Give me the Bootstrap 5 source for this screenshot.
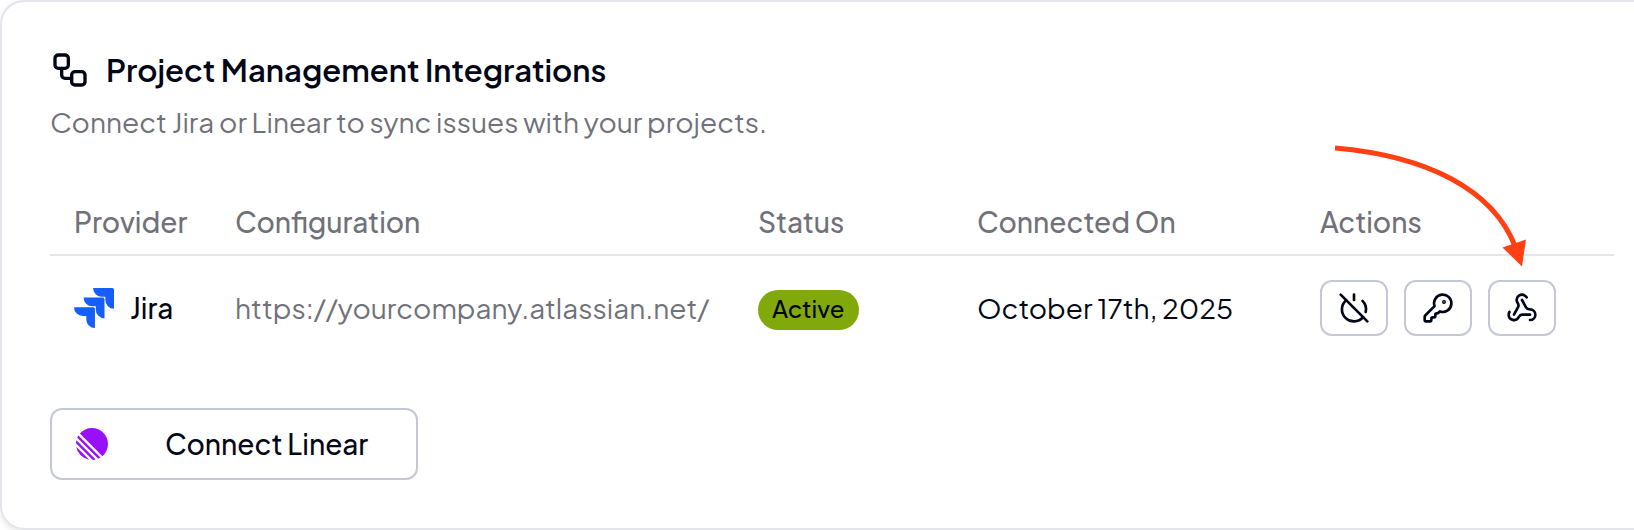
<!DOCTYPE html>
<html lang="en">
<head>
<meta charset="utf-8">
<meta name="viewport" content="width=device-width, initial-scale=1">
<title>Project Management Integrations</title>
<link rel="stylesheet" href="https://cdn.jsdelivr.net/npm/bootstrap@5.3.0/dist/css/bootstrap.min.css">
<style>
  :root { --ink: #020617; --soft: #71717a; --line: #e4e4eb; --edge: #c4c8d6; }
  body { font-family: "Plus Jakarta Sans", Inter, sans-serif; font-size: 28px; line-height: 40px; color: var(--ink); background: #fff; }
  .panel { border: 2px solid var(--line); border-right: 0; border-radius: 24px 0 0 24px; padding: 48px 20px 48px 48px; box-shadow: 0 2px 6px rgba(0, 0, 0, .1); }
  .panel-title { font-size: 31px; line-height: 40px; font-weight: 600; }
  .panel-desc { color: var(--soft); margin-top: 12px; }
  .integrations { margin-top: 48px; table-layout: fixed; min-width: 1540px; color: var(--ink); }
  .integrations > :not(caption) > * > * { padding: 24px; background: transparent; border: 0; color: inherit; }
  .integrations > thead > tr > th { padding-top: 12px; padding-bottom: 12px; font-weight: 500; color: var(--soft); border-bottom: 2px solid var(--line); }
  .col-provider { width: 161px; }
  .col-config { width: 523px; }
  .col-status { width: 219px; }
  .col-date { width: 343px; }
  .integrations > tbody > tr > .cell-url { color: var(--soft); }
  .status-pill { font-size: 24px; line-height: 36px; padding: 0 14px 4px; font-weight: 500; color: var(--ink); background: #82a90b; }
  .btn-outlined { --bs-btn-color: var(--ink); --bs-btn-hover-bg: #f4f4f5; --bs-btn-hover-color: var(--ink); --bs-btn-border-color: var(--edge); --bs-btn-hover-border-color: var(--edge); border-width: 2px; border-radius: 12px; font-size: 28px; line-height: 40px; font-weight: 500; }
  .btn-square { width: 68px; height: 56px; padding: 0; }
  .btn-linear { padding: 14px 48px 14px 24px; margin-top: 48px; gap: 57px; }
  .line-icon { fill: none; stroke: currentColor; stroke-width: 2; stroke-linecap: round; stroke-linejoin: round; flex: none; }
  .pointer-arrow { right: 26px; bottom: 66px; pointer-events: none; }
</style>
</head>
<body>
<main class="panel">
  <header>
    <h1 class="panel-title d-flex align-items-center gap-3 m-0">
      <svg class="line-icon" width="40" height="40" viewBox="0 0 24 24" aria-hidden="true"><rect x="3" y="3" width="8" height="8" rx="2"/><path d="M7 11v4a2 2 0 0 0 2 2h4"/><rect x="13" y="13" width="8" height="8" rx="2"/></svg>
      Project Management Integrations
    </h1>
    <p class="panel-desc mb-0">Connect Jira or Linear to sync issues with your projects.</p>
  </header>

  <table class="table integrations align-middle mb-0">
    <colgroup><col class="col-provider"><col class="col-config"><col class="col-status"><col class="col-date"><col></colgroup>
    <thead>
      <tr><th scope="col">Provider</th><th scope="col">Configuration</th><th scope="col">Status</th><th scope="col">Connected On</th><th scope="col">Actions</th></tr>
    </thead>
    <tbody>
      <tr>
        <td class="pe-0">
          <div class="d-flex align-items-center gap-3">
            <svg width="40" height="40" viewBox="0 0 24 24" fill="#155dfc" aria-hidden="true"><path d="M11.571 11.513H0a5.218 5.218 0 0 0 5.232 5.215h2.13v2.057A5.215 5.215 0 0 0 12.575 24V12.518a1.005 1.005 0 0 0-1.005-1.005zm5.723-5.756H5.736a5.215 5.215 0 0 0 5.215 5.214h2.129v2.058a5.218 5.218 0 0 0 5.215 5.214V6.758a1.001 1.001 0 0 0-1.001-1.001zM23.013 0H11.455a5.215 5.215 0 0 0 5.215 5.215h2.129v2.057A5.215 5.215 0 0 0 24 12.483V1.005A1.001 1.001 0 0 0 23.013 0Z"/></svg>
            <span class="fw-medium">Jira</span>
          </div>
        </td>
        <td class="cell-url">https://yourcompany.atlassian.net/</td>
        <td><span class="status-pill rounded-pill d-inline-block align-middle">Active</span></td>
        <td>October 17th, 2025</td>
        <td>
          <div class="d-flex gap-3">
            <button type="button" class="btn btn-outlined btn-square d-flex align-items-center justify-content-center" aria-label="Disconnect">
              <svg class="line-icon" width="32" height="32" viewBox="0 0 24 24"><path d="M18.36 6.64A9 9 0 0 1 20.77 15"/><path d="M6.16 6.16a9 9 0 1 0 12.68 12.68"/><path d="M12 2v4"/><path d="m2 2 20 20"/></svg>
            </button>
            <button type="button" class="btn btn-outlined btn-square d-flex align-items-center justify-content-center" aria-label="Update credentials">
              <svg class="line-icon" width="32" height="32" viewBox="0 0 24 24"><path d="M2.586 17.414A2 2 0 0 0 2 18.828V21a1 1 0 0 0 1 1h3a1 1 0 0 0 1-1v-1a1 1 0 0 1 1-1h1a1 1 0 0 0 1-1v-1a1 1 0 0 1 1-1h.172a2 2 0 0 0 1.414-.586l.814-.814a6.5 6.5 0 1 0-4-4z"/><circle cx="16.5" cy="7.5" r=".5" fill="currentColor"/></svg>
            </button>
            <div class="position-relative">
              <button type="button" class="btn btn-outlined btn-square d-flex align-items-center justify-content-center" aria-label="Configure webhook">
                <svg class="line-icon" width="32" height="32" viewBox="0 0 24 24"><path d="M18 16.98h-5.99c-1.1 0-1.95.94-2.48 1.9A4 4 0 0 1 2 17c.01-.7.2-1.4.57-2"/><path d="m6 17 3.13-5.78c.53-.97.1-2.18-.5-3.1a4 4 0 1 1 6.89-4.06"/><path d="m12 6 3.13 5.73C15.66 12.7 16.9 13 18 13a4 4 0 0 1 0 8"/></svg>
              </button>
              <svg class="pointer-arrow position-absolute" width="200" height="130" viewBox="0 0 200 130" aria-hidden="true"><path d="M5 8C98 16 163 50 185 106" fill="none" stroke="#ff4013" stroke-width="5"/><path d="M172.500 107.500 196 99.500 192 126.500Z" fill="#ff4013"/></svg>
            </div>
          </div>
        </td>
      </tr>
    </tbody>
  </table>

  <button type="button" class="btn btn-outlined btn-linear d-inline-flex align-items-center">
    <svg width="32" height="32" viewBox="0 0 24 24" fill="#9810fa" aria-hidden="true"><path d="M2.886 4.18A11.982 11.982 0 0 1 11.99 0C18.624 0 24 5.376 24 12.009c0 3.64-1.62 6.903-4.18 9.105L2.887 4.18ZM1.817 5.626l16.556 16.556c-.524.33-1.075.62-1.65.866L.951 7.277c.247-.575.537-1.126.866-1.65ZM.322 9.163l14.515 14.515c-.71.172-1.443.282-2.195.322L0 11.358a12 12 0 0 1 .322-2.195Zm-.17 4.862 9.823 9.824a12.02 12.02 0 0 1-9.824-9.824Z"/></svg>
    Connect Linear
  </button>
</main>
<script src="https://cdn.jsdelivr.net/npm/bootstrap@5.3.0/dist/js/bootstrap.bundle.min.js"></script>
</body>
</html>
